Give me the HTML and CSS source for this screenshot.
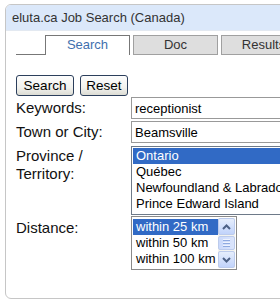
FILE: index.html
```html
<!DOCTYPE html>
<html lang="en">
<head>
    <meta charset="UTF-8">
    <title>eluta.ca Job Search (Canada)</title>
    <link rel="stylesheet" href="styles.css">
</head>
<body>

<div class="panel">
    <div class="panel-head">eluta.ca Job Search (Canada)</div>
    <div class="panel-body">
        <div class="tabs">
            <div class="tab-lead"></div>
            <div class="tab active">Search</div>
            <div class="tab">Doc</div>
            <div class="tab">Results</div>
        </div>

        <div class="buttons">
            <button class="btn search-btn">Search</button>
            <button class="btn reset-btn">Reset</button>
        </div>

        <div class="row">
            <label class="label">Keywords:</label>
            <input class="field" type="text" value="receptionist">
        </div>
        <div class="row">
            <label class="label">Town or City:</label>
            <input class="field" type="text" value="Beamsville">
        </div>
        <div class="row">
            <label class="label">Province /<br>Territory:</label>
            <div class="list province">
                <div class="opt selected">Ontario</div>
                <div class="opt">Québec</div>
                <div class="opt">Newfoundland &amp; Labrador</div>
                <div class="opt">Prince Edward Island</div>
            </div>
        </div>
        <div class="row">
            <label class="label">Distance:</label>
            <div class="list distance">
                <div class="opts">
                    <div class="opt selected">within 25 km</div>
                    <div class="opt">within 50 km</div>
                    <div class="opt">within 100 km</div>
                </div>
                <div class="scrollbar">
                    <div class="sb-btn">
                        <svg width="9" height="6" viewBox="0 0 9 6"><path d="M1 5 L4.5 1.5 L8 5" fill="none" stroke="#4d6185" stroke-width="2"/></svg>
                    </div>
                    <div class="sb-track">
                        <div class="sb-thumb"><span></span><span></span><span></span></div>
                    </div>
                    <div class="sb-btn">
                        <svg width="9" height="6" viewBox="0 0 9 6"><path d="M1 1 L4.5 4.5 L8 1" fill="none" stroke="#4d6185" stroke-width="2"/></svg>
                    </div>
                </div>
            </div>
        </div>
    </div>
</div>

</body>
</html>
```

FILE: styles.css
```css
body {
    margin: 0;
    font-family: "Liberation Sans", Arial, sans-serif;
    background-color: #fff;
    overflow: hidden;
    width: 280px;
    height: 301px;
}
.panel {
    margin: 4px 0 0 5px;
    width: 320px;
    height: 293px;
    border: 1px solid #c6c6c6;
    border-radius: 6px;
    overflow: hidden;
}
.panel-head {
    height: 25px;
    line-height: 25px;
    padding-left: 6px;
    background-color: #dbe8fa;
    border-bottom: 1px solid #e3e9f1;
    color: #333;
    font-size: 13px;
}
.panel-body {
    padding: 4px 0 0 10px;
}
.tabs {
    display: flex;
    align-items: flex-end;
    height: 20px;
}
.tab-lead {
    width: 29px;
    border-bottom: 1px solid #777;
}
.tab {
    width: 83px;
    height: 18px;
    line-height: 18px;
    margin-right: 3px;
    text-align: center;
    font-size: 13px;
    color: #333;
    background-color: #dedede;
    border: 1px solid #a0a0a0;
}
.tab.active {
    height: 19px;
    background-color: #fff;
    color: #3e6fae;
    border-color: #777;
    border-bottom: none;
}
.buttons {
    display: flex;
    gap: 6px;
    margin-top: 20px;
}
.btn {
    height: 21px;
    padding: 0;
    font-family: "Liberation Sans", Arial, sans-serif;
    font-size: 13.5px;
    color: #000;
    border: 1px solid #2c3f5c;
    border-radius: 3px;
    background: linear-gradient(#fdfdfd, #f2f2ee 60%, #dcdcd4);
}
.search-btn {
    width: 58px;
}
.reset-btn {
    width: 48px;
}
.row {
    display: flex;
    align-items: flex-start;
    margin-top: 1px;
}
.row + .row {
    margin-top: 2px;
}
.label {
    width: 115px;
    flex-shrink: 0;
    font-size: 15px;
    line-height: 18px;
    padding-top: 2px;
    color: #111;
}
.field {
    box-sizing: border-box;
    width: 170px;
    height: 22px;
    margin: 0;
    padding: 1px 3px;
    border: 1px solid #999;
    font-family: "Liberation Sans", Arial, sans-serif;
    font-size: 13px;
    color: #000;
}
.list {
    box-sizing: border-box;
    border: 1px solid #6e7a89;
    font-size: 13px;
    background-color: #fff;
}
.province {
    width: 170px;
    height: 69px;
    padding: 1px;
    margin-top: 1px;
}
.opt {
    height: 16px;
    line-height: 16px;
    padding-left: 3px;
    white-space: nowrap;
    color: #000;
}
.opt.selected {
    background-color: #316ac5;
    color: #fff;
}
.distance {
    display: flex;
    width: 106px;
    height: 54px;
    padding: 1px;
    margin-top: -1px;
    border-color: #8a8a8a;
}
.distance .opts {
    flex: 1;
    padding-top: 1px;
    overflow: hidden;
}
.scrollbar {
    width: 17px;
    display: flex;
    flex-direction: column;
    background-color: #f3f3ef;
}
.sb-btn {
    box-sizing: border-box;
    height: 17px;
    display: flex;
    align-items: center;
    justify-content: center;
    border: 1px solid #bccbec;
    border-radius: 2px;
    background: linear-gradient(#e6eefc, #c1d3fb);
}
.sb-track {
    flex: 1;
    display: flex;
    align-items: center;
}
.sb-thumb {
    box-sizing: border-box;
    width: 17px;
    height: 14px;
    display: flex;
    flex-direction: column;
    align-items: center;
    justify-content: center;
    gap: 1px;
    border: 1px solid #bccbec;
    border-radius: 2px;
    background: linear-gradient(90deg, #cad9fb, #dbe5fc);
}
.sb-thumb span {
    width: 7px;
    height: 1px;
    background-color: #eef3fe;
    border-bottom: 1px solid #8faae0;
}
```
